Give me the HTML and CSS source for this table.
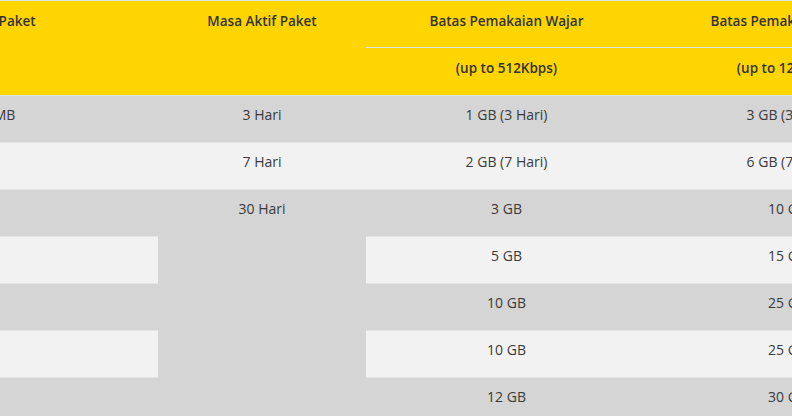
FILE: index.html
```html
<!DOCTYPE html>
<html lang="id">
<head>
<meta charset="utf-8">
<title>Tabel Paket</title>
<link rel="stylesheet" href="styles.css">
</head>
<body>
<div class="table-wrap">
  <table class="paket">
    <colgroup>
      <col class="c-name">
      <col class="c-masa">
      <col class="c-fup">
      <col class="c-fup">
      <col class="c-fup">
    </colgroup>
    <thead>
      <tr class="head-top">
        <th rowspan="2" class="left">Nama Paket</th>
        <th rowspan="2">Masa Aktif Paket</th>
        <th>Batas Pemakaian Wajar</th>
        <th>Batas Pemakaian Wajar</th>
        <th>Batas Pemakaian Wajar</th>
      </tr>
      <tr class="head-sub">
        <th>(up to 512Kbps)</th>
        <th>(up to 128Kbps)</th>
        <th>(up to 64Kbps)</th>
      </tr>
    </thead>
    <tbody>
      <tr class="dark">
        <td class="left">1500 MB</td>
        <td>3 Hari</td>
        <td>1 GB (3 Hari)</td>
        <td>3 GB (3 Hari)</td>
        <td></td>
      </tr>
      <tr class="light">
        <td class="left"></td>
        <td>7 Hari</td>
        <td>2 GB (7 Hari)</td>
        <td>6 GB (7 Hari)</td>
        <td></td>
      </tr>
      <tr class="dark">
        <td class="left"></td>
        <td rowspan="5" class="span">30 Hari</td>
        <td>3 GB</td>
        <td>10 GB</td>
        <td></td>
      </tr>
      <tr class="light">
        <td class="left"></td>
        <td>5 GB</td>
        <td>15 GB</td>
        <td></td>
      </tr>
      <tr class="dark">
        <td class="left"></td>
        <td>10 GB</td>
        <td>25 GB</td>
        <td></td>
      </tr>
      <tr class="light">
        <td class="left"></td>
        <td>10 GB</td>
        <td>25 GB</td>
        <td></td>
      </tr>
      <tr class="dark">
        <td class="left"></td>
        <td>12 GB</td>
        <td>30 GB</td>
        <td></td>
      </tr>
    </tbody>
  </table>
</div>
</body>
</html>
```
FILE: styles.css
```css
html, body {
  margin: 0;
  padding: 0;
  overflow: hidden;
  background: #ffffff;
}

.table-wrap {
  width: 792px;
  height: 416px;
  overflow: hidden;
}

.paket {
  margin-left: -60px;
  border-collapse: separate;
  border-spacing: 0;
  table-layout: fixed;
  width: 1269px;
  font-family: "Open Sans", "Liberation Sans", sans-serif;
  font-size: 14px;
  line-height: 20px;
  color: #3a3a3a;
}

.c-name { width: 218px; }
.c-masa { width: 208px; }
.c-fup { width: 281px; }

.paket th,
.paket td {
  border-top: 1px solid #e4e4e4;
  padding: 9px 10px 17px;
  text-align: center;
  vertical-align: top;
  white-space: nowrap;
  overflow: hidden;
}

.paket th {
  background: #ffd500;
  font-size: 13.5px;
  font-weight: 600;
  color: #333333;
}

.paket .head-top th {
  padding-top: 10px;
  padding-bottom: 16px;
}

.paket .head-sub th {
  padding-top: 10px;
  padding-bottom: 17px;
}

.paket th.left {
  text-align: left;
  padding-left: 16px;
}

.paket td.left {
  text-align: left;
  padding-left: 18px;
}

.paket tr.dark td { background: #d5d5d5; }
.paket tr.light td { background: #f2f2f2; }
.paket td.span { background: #d5d5d5; }
```
